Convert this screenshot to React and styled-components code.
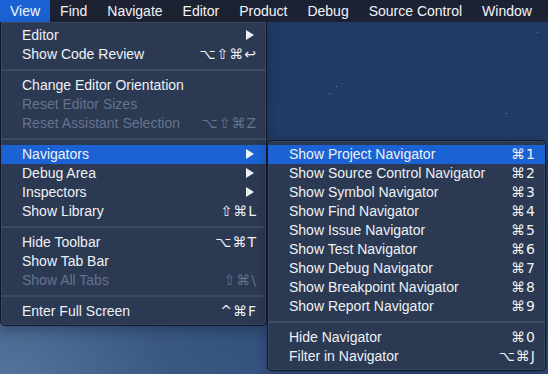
import styled, { createGlobalStyle } from "styled-components";

const GlobalStyle = createGlobalStyle`
  html, body {
    margin: 0;
    padding: 0;
    height: 100%;
  }
  body {
    font-family: "Liberation Sans", "DejaVu Sans", Arial, sans-serif;
    font-size: 14px;
    color: #eef1f5;
    overflow: hidden;
  }
  #root {
    height: 100%;
  }
`;

const topItems = ["View", "Find", "Navigate", "Editor", "Product", "Debug", "Source Control", "Window"];

const viewMenu = [
  { label: "Editor", arrow: true },
  { label: "Show Code Review", keys: "⌥⇧⌘↩" },
  { sep: true },
  { label: "Change Editor Orientation" },
  { label: "Reset Editor Sizes", disabled: true },
  { label: "Reset Assistant Selection", keys: "⌥⇧⌘Z", disabled: true },
  { sep: true },
  { label: "Navigators", arrow: true, active: true, sub: true },
  { label: "Debug Area", arrow: true },
  { label: "Inspectors", arrow: true },
  { label: "Show Library", keys: "⇧⌘L" },
  { sep: true },
  { label: "Hide Toolbar", keys: "⌥⌘T" },
  { label: "Show Tab Bar" },
  { label: "Show All Tabs", keys: "⇧⌘\\", disabled: true },
  { sep: true },
  { label: "Enter Full Screen", keys: "^⌘F" },
];

const navMenu = [
  { label: "Show Project Navigator", keys: "⌘1", active: true },
  { label: "Show Source Control Navigator", keys: "⌘2" },
  { label: "Show Symbol Navigator", keys: "⌘3" },
  { label: "Show Find Navigator", keys: "⌘4" },
  { label: "Show Issue Navigator", keys: "⌘5" },
  { label: "Show Test Navigator", keys: "⌘6" },
  { label: "Show Debug Navigator", keys: "⌘7" },
  { label: "Show Breakpoint Navigator", keys: "⌘8" },
  { label: "Show Report Navigator", keys: "⌘9" },
  { sep: true },
  { label: "Hide Navigator", keys: "⌘0" },
  { label: "Filter in Navigator", keys: "⌥⌘J" },
];

function Arrow() {
  return (
    <svg width="8" height="10" viewBox="0 0 8 10">
      <polygon points="0,0 8,5 0,10" fill="currentColor" />
    </svg>
  );
}

function MenuRows({ items, children }) {
  return items.map((item, i) =>
    item.sep ? (
      <Separator key={i} />
    ) : (
      <Row key={i} $active={item.active} $disabled={item.disabled}>
        <Label>{item.label}</Label>
        {item.keys && <Keys>{item.keys}</Keys>}
        {item.arrow && <ArrowBox><Arrow /></ArrowBox>}
        {item.sub && children}
      </Row>
    )
  );
}

export default function App() {
  return (
    <Screen>
      <GlobalStyle />
      <MenuBar>
        {topItems.map((t, i) => (
          <TopItem key={t} $active={i === 0}>{t}</TopItem>
        ))}
      </MenuBar>
      <Desktop>
        <Star style={{ left: 537, top: 10 }} />
        <Star style={{ left: 336, top: 64 }} />
        <Star style={{ left: 329, top: 71 }} />
        <Star style={{ left: 506, top: 91 }} />
        <MainMenu>
          <MenuRows items={viewMenu}>
            <SubMenu>
              <MenuRows items={navMenu} />
            </SubMenu>
          </MenuRows>
        </MainMenu>
      </Desktop>
    </Screen>
  );
}

const Screen = styled.div`
  width: 548px;
  height: 374px;
  display: flex;
  flex-direction: column;
  background:
    radial-gradient(ellipse 420px 260px at 0% 100%, #56749b 0%, rgba(70, 100, 140, 0.55) 40%, rgba(31, 57, 99, 0) 100%),
    linear-gradient(180deg, #213a64 0%, #223d68 60%, #2c4a77 100%);
`;

const MenuBar = styled.div`
  height: 22px;
  flex: none;
  display: flex;
  align-items: stretch;
  background: #1c2232;
`;

const TopItem = styled.div`
  display: flex;
  align-items: center;
  padding: 0 10px 1px ${(p) => (p.$active ? "10px" : "9px")};
  margin-right: 1px;
  color: #f2f4f8;
  background: ${(p) => (p.$active ? "#1b62d4" : "transparent")};
  white-space: nowrap;
`;

const Desktop = styled.div`
  position: relative;
  flex: 1;
`;

const Star = styled.span`
  position: absolute;
  width: 1px;
  height: 1px;
  background: rgba(170, 190, 220, 0.6);
`;

const Panel = styled.div`
  position: absolute;
  box-sizing: border-box;
  padding: 4px 0;
  background: #2b3953;
  border: 1px solid rgba(10, 14, 24, 0.75);
  box-shadow: inset 0 0 0 1px rgba(110, 125, 150, 0.18), 0 4px 12px rgba(0, 0, 0, 0.25);
`;

const MainMenu = styled(Panel)`
  left: 0;
  top: 0;
  width: 267px;
  border-top: none;
  border-radius: 0 0 5px 5px;
`;

const SubMenu = styled(Panel)`
  left: 266px;
  top: -5px;
  width: 279px;
  border-radius: 5px;
  z-index: 2;
`;

const Row = styled.div`
  position: relative;
  box-sizing: border-box;
  height: 19px;
  display: flex;
  align-items: center;
  padding: 0 9px 1px 21px;
  color: ${(p) => (p.$disabled ? "#65738d" : "#eef1f5")};
  background: ${(p) => (p.$active ? "#1b62d4" : "transparent")};
  white-space: nowrap;
`;

const Label = styled.span`
  flex: 1;
`;

const Keys = styled.span`
  letter-spacing: 1px;
  font-family: "DejaVu Sans", "Liberation Sans", sans-serif;
  font-size: 14px;
`;

const ArrowBox = styled.span`
  display: flex;
  align-items: center;
  padding-right: 3px;
`;

const Separator = styled.div`
  height: 12px;
  display: flex;
  align-items: center;

  &::after {
    content: "";
    flex: 1;
    height: 2px;
    background: #3c4b64;
  }
`;
